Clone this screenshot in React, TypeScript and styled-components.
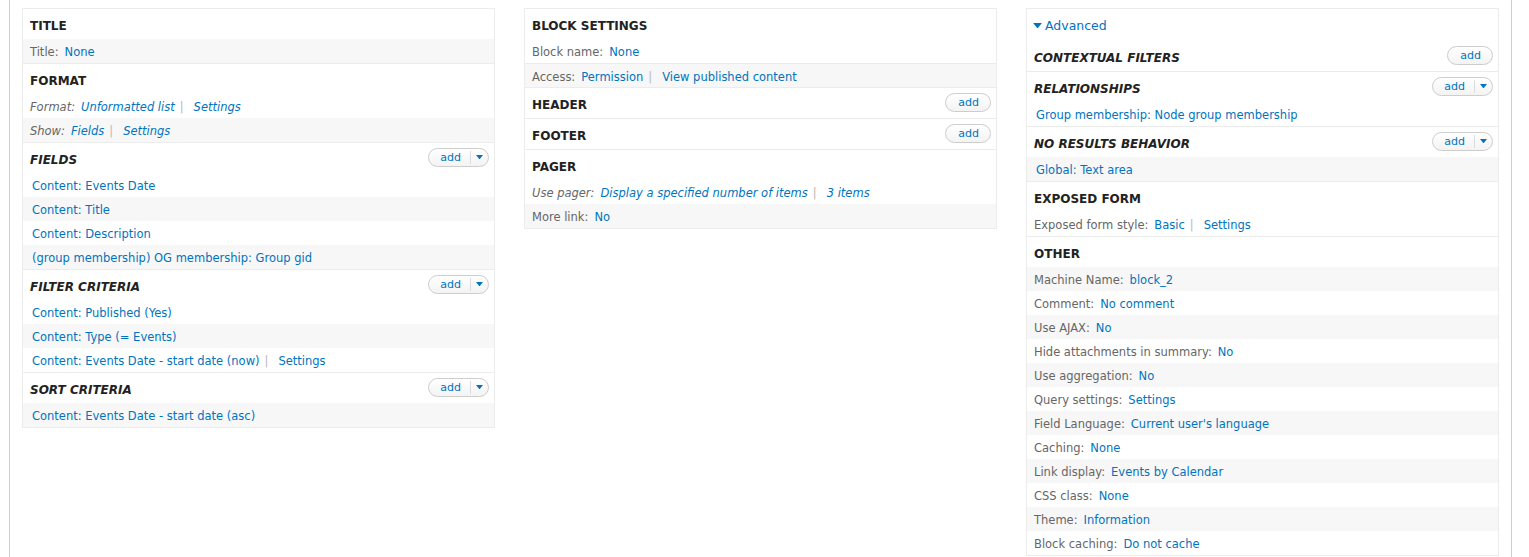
import React from "react";
import styled, { createGlobalStyle } from "styled-components";

const GlobalStyle = createGlobalStyle`
  body {
    margin: 0;
    background: #fff;
    font-family: "DejaVu Sans", Verdana, sans-serif;
    font-size: 11.5px;
    color: #666;
  }
`;

type AddKind = "none" | "simple" | "dropdown";

type Setting = {
  label?: string;
  links: string[];
  italic?: boolean;
  shade?: boolean;
  divided?: boolean;
};

type Bucket = {
  title: string;
  italic?: boolean;
  add?: AddKind;
  rows: Setting[];
};

const firstColumn: Bucket[] = [
  { title: "Title", rows: [{ label: "Title:", links: ["None"], shade: true }] },
  {
    title: "Format",
    rows: [
      { label: "Format:", links: ["Unformatted list", "Settings"], italic: true },
      { label: "Show:", links: ["Fields", "Settings"], italic: true, shade: true },
    ],
  },
  {
    title: "Fields",
    italic: true,
    add: "dropdown",
    rows: [
      { links: ["Content: Events Date"] },
      { links: ["Content: Title"], shade: true },
      { links: ["Content: Description"] },
      { links: ["(group membership) OG membership: Group gid"], shade: true },
    ],
  },
  {
    title: "Filter criteria",
    italic: true,
    add: "dropdown",
    rows: [
      { links: ["Content: Published (Yes)"] },
      { links: ["Content: Type (= Events)"], shade: true },
      { links: ["Content: Events Date - start date (now)", "Settings"] },
    ],
  },
  {
    title: "Sort criteria",
    italic: true,
    add: "dropdown",
    rows: [{ links: ["Content: Events Date - start date (asc)"], shade: true }],
  },
];

const secondColumn: Bucket[] = [
  {
    title: "Block settings",
    rows: [
      { label: "Block name:", links: ["None"] },
      { label: "Access:", links: ["Permission", "View published content"], shade: true, divided: true },
    ],
  },
  { title: "Header", add: "simple", rows: [] },
  { title: "Footer", add: "simple", rows: [] },
  {
    title: "Pager",
    rows: [
      { label: "Use pager:", links: ["Display a specified number of items", "3 items"], italic: true },
      { label: "More link:", links: ["No"], shade: true },
    ],
  },
];

const otherRows: [string, string][] = [
  ["Machine Name:", "block_2"],
  ["Comment:", "No comment"],
  ["Use AJAX:", "No"],
  ["Hide attachments in summary:", "No"],
  ["Use aggregation:", "No"],
  ["Query settings:", "Settings"],
  ["Field Language:", "Current user's language"],
  ["Caching:", "None"],
  ["Link display:", "Events by Calendar"],
  ["CSS class:", "None"],
  ["Theme:", "Information"],
  ["Block caching:", "Do not cache"],
];

const advancedColumn: Bucket[] = [
  { title: "Contextual filters", italic: true, add: "simple", rows: [] },
  {
    title: "Relationships",
    italic: true,
    add: "dropdown",
    rows: [{ links: ["Group membership: Node group membership"] }],
  },
  {
    title: "No results behavior",
    italic: true,
    add: "dropdown",
    rows: [{ links: ["Global: Text area"], shade: true }],
  },
  {
    title: "Exposed form",
    rows: [{ label: "Exposed form style:", links: ["Basic", "Settings"] }],
  },
  {
    title: "Other",
    rows: otherRows.map(([label, link], i) => ({ label, links: [link], shade: i % 2 === 0 })),
  },
];

const Page = styled.div`
  box-sizing: border-box;
  width: 1503px;
  min-height: 557px;
  margin-left: 9px;
  padding: 8px 12px 0;
  border-left: 1px solid #cfcfcf;
  border-right: 1px solid #cfcfcf;
  display: grid;
  grid-template-columns: repeat(3, 473px);
  column-gap: 29px;
  align-items: start;
`;

const Column = styled.section`
  border: 1px solid #ececec;
  background: #fff;
`;

const BucketBox = styled.div<{ $first?: boolean }>`
  border-top: ${(p) => (p.$first ? "none" : "1px solid #ececec")};
`;

const Heading = styled.div`
  height: 30px;
  display: flex;
  align-items: center;
  justify-content: space-between;
  padding: 0 5px 0 7px;
`;

const HeadingText = styled.h3<{ $italic?: boolean }>`
  margin: 3px 0 0;
  font-size: 12px;
  font-weight: bold;
  font-style: ${(p) => (p.$italic ? "italic" : "normal")};
  text-transform: uppercase;
  color: #222;
`;

const Row = styled.div<{ $shade?: boolean; $italic?: boolean; $divided?: boolean }>`
  box-sizing: border-box;
  height: 24px;
  display: flex;
  align-items: center;
  padding: 2px 7px 0;
  white-space: pre;
  background: ${(p) => (p.$shade ? "#f7f7f7" : "#fff")};
  font-style: ${(p) => (p.$italic ? "italic" : "normal")};
  border-top: ${(p) => (p.$divided ? "1px solid #ececec" : "none")};
`;

const Label = styled.span`
  color: #666;
  margin-right: 4px;
`;

const Link = styled.a`
  color: #0074bd;
  text-decoration: none;
  padding: 0 2px;
  cursor: pointer;
`;

const Pipe = styled.span`
  color: #b9b9b9;
  margin: 0 8px 0 3px;
`;

const AddButton = styled.span`
  height: 17px;
  margin-top: -2px;
  display: inline-flex;
  align-items: stretch;
  border: 1px solid #cdcdcd;
  border-radius: 10px;
  background: linear-gradient(#ffffff, #f3f3f3);
  color: #0074bd;
  font-size: 11px;
`;

const AddLabel = styled.span<{ $compact?: boolean }>`
  display: flex;
  align-items: center;
  padding: ${(p) => (p.$compact ? "0 9px 0 11px" : "0 11px 0 12px")};
`;

const AddArrow = styled.span`
  width: 17px;
  display: flex;
  align-items: center;
  justify-content: center;
  border-left: 1px solid #dcdcdc;
  margin: 2px 0;
`;

const Toggle = styled.div`
  height: 32px;
  display: flex;
  align-items: center;
  gap: 3px;
  padding: 1px 6px 0;
  box-sizing: border-box;
  color: #0074bd;
  font-size: 12.5px;
`;

function Caret({ size = 8 }: { size?: number }) {
  return (
    <svg width={size} height={size / 2 + 1} viewBox="0 0 8 5">
      <path d="M0 0h8L4 5z" fill="#0074bd" />
    </svg>
  );
}

function Add({ kind }: { kind: AddKind }) {
  if (kind === "none") return null;
  return (
    <AddButton>
      <AddLabel $compact={kind === "dropdown"}>add</AddLabel>
      {kind === "dropdown" && (
        <AddArrow>
          <Caret size={7} />
        </AddArrow>
      )}
    </AddButton>
  );
}

function SettingRow({ row }: { row: Setting }) {
  return (
    <Row $shade={row.shade} $italic={row.italic} $divided={row.divided}>
      {row.label && <Label>{row.label}</Label>}
      {row.links.map((link, i) => (
        <React.Fragment key={link}>
          {i > 0 && <Pipe>|</Pipe>}
          <Link>{link}</Link>
        </React.Fragment>
      ))}
    </Row>
  );
}

function Buckets({ buckets }: { buckets: Bucket[] }) {
  return (
    <>
      {buckets.map((b, i) => (
        <BucketBox key={b.title} $first={i === 0}>
          <Heading>
            <HeadingText $italic={b.italic}>{b.title}</HeadingText>
            <Add kind={b.add ?? "none"} />
          </Heading>
          {b.rows.map((row, j) => (
            <SettingRow key={j} row={row} />
          ))}
        </BucketBox>
      ))}
    </>
  );
}

export default function App() {
  return (
    <>
      <GlobalStyle />
      <Page>
        <Column>
          <Buckets buckets={firstColumn} />
        </Column>
        <Column>
          <Buckets buckets={secondColumn} />
        </Column>
        <Column>
          <Toggle>
            <Caret size={9} />
            <span>Advanced</span>
          </Toggle>
          <Buckets buckets={advancedColumn} />
        </Column>
      </Page>
    </>
  );
}
